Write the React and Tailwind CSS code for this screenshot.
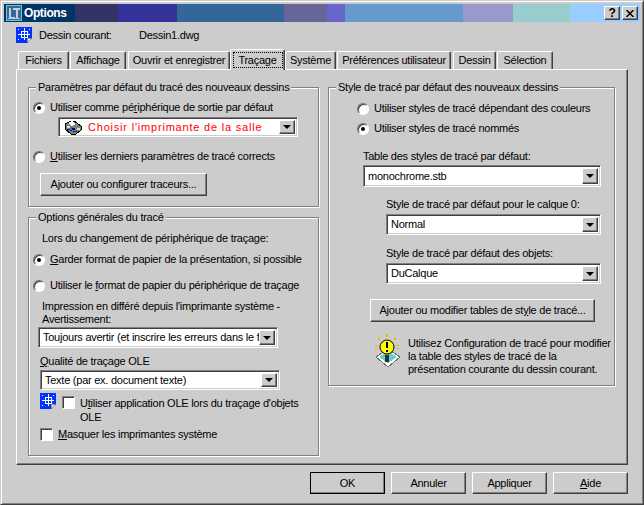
const face = 'bg-[#cccccc]';
const raised = 'border border-t-white border-l-white border-r-[#404040] border-b-[#404040] shadow-[inset_-1px_-1px_0_#808080]';

function Radio({ checked }) {
  return (
    <span className="flex h-[12px] w-[12px] shrink-0 items-center justify-center rounded-full border border-t-[#707070] border-l-[#707070] border-r-white border-b-white bg-white shadow-[inset_1px_1px_0_#404040]">
      {checked && <span className="h-[4px] w-[4px] rounded-full bg-black" />}
    </span>
  );
}

function RadioRow({ checked, className, children }) {
  return (
    <div className={`flex items-center gap-[5px] ${className}`}>
      <Radio checked={checked} />
      <span>{children}</span>
    </div>
  );
}

function Check({ className = '' }) {
  return <span className={`block h-[13px] w-[13px] shrink-0 border border-t-[#808080] border-l-[#808080] border-r-white border-b-white bg-white shadow-[inset_1px_1px_0_#404040] ${className}`} />;
}

function Combo({ className = '', children }) {
  return (
    <div className={`flex items-center justify-between overflow-hidden border border-t-[#808080] border-l-[#808080] border-r-white border-b-white bg-white shadow-[inset_1px_1px_0_#404040,inset_-1px_-1px_0_#cccccc] p-[2px] ${className}`}>
      <div className="min-w-0 flex-1 overflow-hidden whitespace-nowrap pl-[2px]">{children}</div>
      <span className={`flex h-full w-[16px] shrink-0 items-center justify-center ${face} ${raised}`}>
        <span className="h-0 w-0 border-x-[4px] border-t-[4px] border-x-transparent border-t-black" />
      </span>
    </div>
  );
}

function Button({ className = '', children }) {
  return <div className={`flex items-center justify-center ${face} ${raised} ${className}`}><span>{children}</span></div>;
}

function Group({ title, className = '', children }) {
  return (
    <div className={`relative border border-[#808080] shadow-[inset_1px_1px_0_#ffffff,1px_1px_0_#ffffff] ${className}`}>
      <span className={`absolute top-[-7px] left-[7px] px-[2px] whitespace-nowrap ${face}`}>{title}</span>
      {children}
    </div>
  );
}

function BlueIcon({ className = '' }) {
  return (
    <svg className={className} width="16" height="16" viewBox="0 0 16 16" shapeRendering="crispEdges">
      <path d="M0 0h16v11l-5 5H0z" fill="#0033ff" />
      <path d="M11 16l5-5h-5z" fill="#e8e8e8" stroke="#404040" strokeWidth="0.5" />
      <path d="M5 4h6v6H5zM8 1v12M2 7h12" fill="none" stroke="#ffffff" />
      <path d="M2 2h1v1H2zM13 2h1v1h-1zM2 12h1v1H2zM12 12h1v1h-1z" fill="#ffffff" />
    </svg>
  );
}

function LtIcon() {
  return (
    <svg className="shrink-0" width="16" height="16" viewBox="0 0 16 16" shapeRendering="crispEdges">
      <path d="M0 0h16v16H0z" fill="#66cccc" />
      <path d="M1 1h14v14H1z" fill="#336699" />
      <path d="M3 3h2v9h4v1H3z" fill="#cccccc" />
      <path d="M7 3h7v2h-2v8h-2V5H7z" fill="#cccccc" />
      <path d="M2 13h12v1H2z" fill="#99ccff" />
    </svg>
  );
}

function PrinterIcon() {
  return (
    <svg className="shrink-0" width="18" height="15" viewBox="0 0 18 15" shapeRendering="crispEdges">
      <path d="M1 4l6-3h3l7 5v4l-5 4H7L1 9z" fill="#808080" stroke="#000000" />
      <path d="M4 3l4-2 4 3-4 2z" fill="#ffffff" />
      <path d="M3 6h3v2H3zM13 8h3v2h-3z" fill="#e0e0e0" />
      <path d="M6 7h3v2H6z" fill="#00a040" />
      <path d="M8 8h3v2H8zM6 10h2v1H6z" fill="#0000cc" />
      <path d="M3 9h3v1H3zM9 11h4v1H9z" fill="#202020" />
    </svg>
  );
}

function BulbIcon() {
  return (
    <svg className="shrink-0" width="26" height="34" viewBox="0 0 26 34" shapeRendering="crispEdges">
      <path d="M1 23l12-8 12 8-12 10z" fill="#ffffff" stroke="#707070" />
      <path d="M4 23l9-6 9 6-9 6z" fill="#66cccc" />
      <path d="M11 0h2v3h-2zM3 4h2v2H3zM19 4h2v2h-2zM0 11h3v1H0zM21 11h3v1h-3zM0 14h3v1H0zM21 14h3v1h-3z" fill="#d8c000" />
      <path d="M10 21h4v7h-4z" fill="#303030" />
      <circle cx="12" cy="13" r="7" fill="#ffff00" stroke="#000000" shapeRendering="auto" />
      <path d="M11 8h2v6h-2zM11 16h2v2h-2z" fill="#000000" />
    </svg>
  );
}

function Tab({ active, className = '', children }) {
  const state = active
    ? 'relative z-10 -mb-px h-[21px] pt-[2px] items-start'
    : 'h-[18px] items-center';
  return (
    <div className={`flex justify-center whitespace-nowrap rounded-t-[2px] border border-b-0 border-t-white border-l-white border-r-[#404040] shadow-[inset_-1px_0_0_#808080] ${face} ${state} ${className}`}>
      {active
        ? <span className="flex h-[16px] w-[50px] items-center justify-center border border-dotted border-black">{children}</span>
        : <span>{children}</span>}
    </div>
  );
}

export default function App() {
  return (
    <div className={`flex h-[505px] w-[644px] flex-col overflow-hidden border border-t-[#cccccc] border-l-[#cccccc] border-r-[#404040] border-b-[#404040] p-[3px] font-['Liberation_Sans',Arial,sans-serif] text-[11px] leading-[13px] tracking-[-0.25px] text-black shadow-[inset_1px_1px_0_#ffffff,inset_-1px_-1px_0_#808080] ${face}`}>
      {/* title bar */}
      <div className="relative flex h-[18px] shrink-0">
        <div className="flex w-[71px] items-center gap-[2px] bg-[#003366] pl-[2px] text-[12px] font-bold tracking-[-0.4px] text-white">
          <LtIcon />
          Options
        </div>
        <div className="w-[43px] bg-[#333366]" />
        <div className="w-[59px] bg-[#333399]" />
        <div className="w-[107px] bg-[#336699]" />
        <div className="w-[43px] bg-[#666699]" />
        <div className="w-[18px] bg-[#6666cc]" />
        <div className="w-[118px] bg-[#6699cc]" />
        <div className="w-[50px] bg-[#9999cc]" />
        <div className="w-[57px] bg-[#99cccc]" />
        <div className="flex-1 bg-[#99ccff]" />
        <div className="absolute top-[2px] right-[2px] flex gap-[2px]">
          <span className={`flex h-[14px] w-[16px] items-center justify-center text-[12px] font-bold ${face} ${raised}`}>?</span>
          <span className={`flex h-[14px] w-[16px] items-center justify-center ${face} ${raised}`}>
            <svg width="8" height="7" viewBox="0 0 8 7"><path d="M0.5 0l7 7M7.5 0l-7 7" stroke="#000000" strokeWidth="1.5" /></svg>
          </span>
        </div>
      </div>

      {/* current drawing */}
      <div className="mt-[5px] flex h-[16px] shrink-0 items-center pl-[12px]">
        <BlueIcon className="shrink-0" />
        <span className="ml-[7px] w-[100px]">Dessin courant:</span>
        <span>Dessin1.dwg</span>
      </div>

      {/* tabs */}
      <div className="mt-[6px] flex h-[20px] shrink-0 items-end pl-[14px]">
        <Tab className="w-[51px]">Fichiers</Tab>
        <Tab className="ml-px w-[56px]">Affichage</Tab>
        <Tab className="ml-[2px] w-[102px]">Ouvrir et enregistrer</Tab>
        <Tab active className="w-[55px]">Traçage</Tab>
        <Tab className="w-[51px]">Système</Tab>
        <Tab className="ml-px w-[114px]">Préférences utilisateur</Tab>
        <Tab className="ml-[2px] w-[43px]">Dessin</Tab>
        <Tab className="ml-px w-[56px]">Sélection</Tab>
      </div>

      {/* panel */}
      <div className="ml-[12px] flex h-[396px] w-[612px] shrink-0 gap-[9px] border border-t-white border-l-white border-r-[#404040] border-b-[#404040] pt-[17px] pl-[11px] shadow-[inset_-1px_-1px_0_#808080]">
        <div className="w-[291px] shrink-0">
          <Group title="Paramètres par défaut du tracé des nouveaux dessins" className="h-[120px] pt-[13px] pl-[4px]">
            <RadioRow checked>Utiliser comme pé<u>r</u>iphérique de sortie par défaut</RadioRow>
            <Combo className="mt-[3px] ml-[25px] h-[20px] w-[240px]">
              <div className="flex items-center gap-[6px] pl-[1px]">
                <PrinterIcon />
                <span className="text-[11px] tracking-[0.8px] text-[#ff0000]">Choisir l'imprimante de la salle</span>
              </div>
            </Combo>
            <RadioRow className="mt-[13px]"><u>U</u>tiliser les derniers paramètres de tracé corrects</RadioRow>
            <Button className="mt-[10px] ml-[7px] h-[23px] w-[167px]">Ajouter ou configurer traceurs...</Button>
          </Group>

          <Group title="Options générales du tracé" className="mt-[10px] h-[239px] pt-[14px] pl-[4px]">
            <div className="pl-[9px]">Lors du changement de périphérique de traçage:</div>
            <RadioRow checked className="mt-[8px]"><u>G</u>arder format de papier de la présentation, si possible</RadioRow>
            <RadioRow className="mt-[13px]">Utiliser le <u>f</u>ormat de papier du périphérique de traçage</RadioRow>
            <div className="mt-[8px] pl-[9px]">Impression en différé depuis l'imprimante système -<br />Avertissement:</div>
            <Combo className="mt-[1px] ml-[5px] h-[21px] w-[240px]">Toujours avertir (et inscrire les erreurs dans le fichier)</Combo>
            <div className="mt-[7px] pl-[7px]"><u>Q</u>ualité de traçage OLE</div>
            <Combo className="mt-[2px] ml-[7px] h-[20px] w-[240px]">Texte (par ex. document texte)</Combo>
            <div className="mt-[3px] flex pl-[7px]">
              <BlueIcon className="shrink-0" />
              <Check className="mt-[3px] ml-[6px]" />
              <span className="mt-[3px] ml-[5px] w-[230px] leading-[14px]">U<u>t</u>iliser application OLE lors du traçage d'objets OLE</span>
            </div>
            <div className="mt-[4px] flex items-center gap-[5px] pl-[7px]">
              <Check />
              <span><u>M</u>asquer les imprimantes système</span>
            </div>
          </Group>
        </div>

        <Group title="Style de tracé par défaut des nouveaux dessins" className="h-[299px] w-[287px] shrink-0 pt-[14px] pl-[28px]">
          <RadioRow>Utiliser styles de tracé dépendant des couleurs</RadioRow>
          <RadioRow checked className="mt-[7px]">Utiliser styles de tracé nommés</RadioRow>
          <div className="mt-[15px] pl-[6px]">Table des styles de tracé par défaut:</div>
          <Combo className="mt-[2px] ml-[6px] h-[22px] w-[238px]">monochrome.stb</Combo>
          <div className="mt-[11px] pl-[29px]">Style de tracé par défaut pour le calque 0:</div>
          <Combo className="mt-[3px] ml-[29px] h-[21px] w-[215px]">Normal</Combo>
          <div className="mt-[12px] pl-[29px]">Style de tracé par défaut des objets:</div>
          <Combo className="mt-[3px] ml-[29px] h-[21px] w-[215px]">DuCalque</Combo>
          <Button className="mt-[15px] ml-[13px] h-[23px] w-[225px]">Ajouter ou modifier tables de st<u>y</u>le de tracé...</Button>
          <div className="mt-[12px] ml-[18px] flex gap-[7px]">
            <BulbIcon />
            <p className="mt-[3px]">Utilisez Configuration de tracé pour modifier<br />la table des styles de tracé de la<br />présentation courante du dessin courant.</p>
          </div>
        </Group>
      </div>

      {/* dialog buttons */}
      <div className="mt-[7px] flex shrink-0 gap-[6px] pl-[306px]">
        <Button className="h-[22px] w-[75px] outline outline-1 outline-black -outline-offset-1">OK</Button>
        <Button className="h-[22px] w-[75px]">Annuler</Button>
        <Button className="h-[22px] w-[75px]">Appliquer</Button>
        <Button className="h-[22px] w-[75px]"><u>A</u>ide</Button>
      </div>
    </div>
  );
}
